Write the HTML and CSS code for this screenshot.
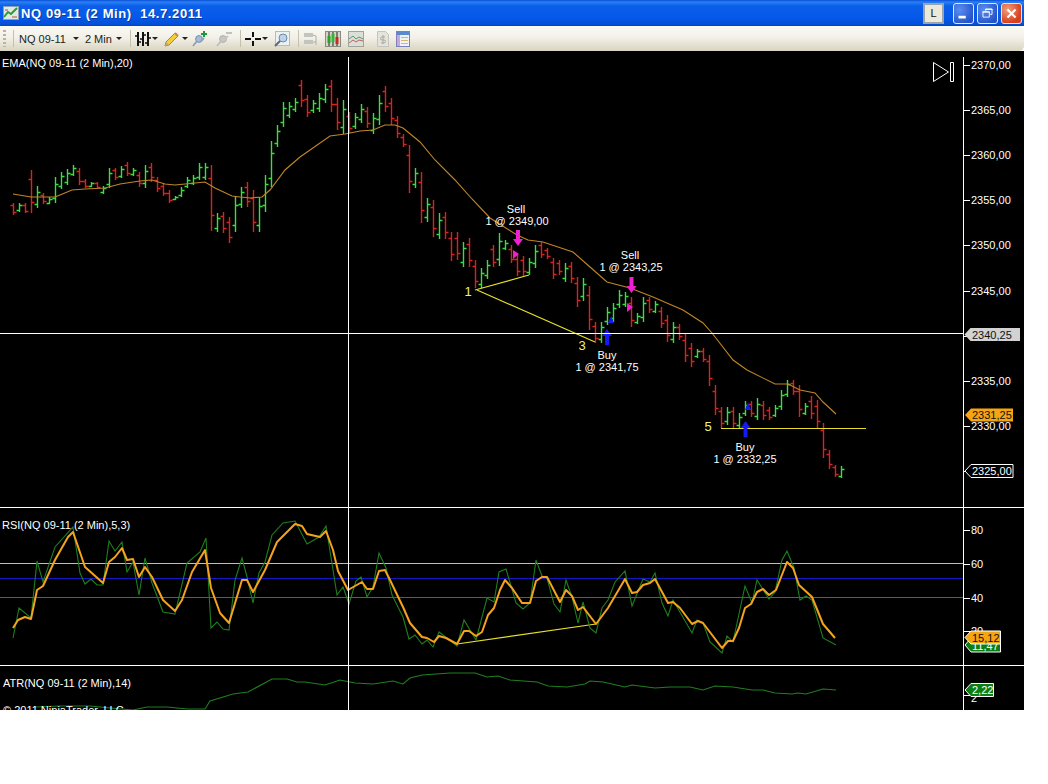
FILE: index.html
```html
<!DOCTYPE html>
<html lang="en">
<head>
<meta charset="utf-8">
<title>NQ 09-11 (2 Min) 14.7.2011</title>
<link rel="stylesheet" href="styles.css">
</head>
<body>
<div class="window">
  <header class="titlebar">
    <svg class="app-icon" width="16" height="16" viewBox="0 0 16 16"><rect x="0.5" y="1.5" width="15" height="13" fill="#dfe8e4" stroke="#8aa0b8"/><path d="M1 12 5 7l3 2 6-6" fill="none" stroke="#2a9a3a" stroke-width="2"/><path d="M2 5h3M9 12h5" stroke="#c05030"/></svg>
    <span class="title">NQ 09-11 (2 Min)  14.7.2011</span>
    <div class="title-buttons">
      <span class="link-btn">L</span>
      <span class="win-btn"><svg width="21" height="21" viewBox="0 0 21 21"><rect x="5" y="13" width="8" height="3" fill="#fff"/></svg></span>
      <span class="win-btn"><svg width="21" height="21" viewBox="0 0 21 21"><path d="M8.5 7.500v-2h7v6h-2M5.500 8.500h7v6h-7z" fill="none" stroke="#fff"/><path d="M8 6h8M5 9h8" stroke="#fff"/></svg></span>
      <span class="win-btn close"><svg width="21" height="21" viewBox="0 0 21 21"><path d="M6 6l9 9M15 6l-9 9" stroke="#fff" stroke-width="2.4"/></svg></span>
    </div>
  </header>
  <nav class="toolbar">
    <span class="grip"></span>
    <span class="sep"></span>
    <span class="tb-text tb-instrument">NQ 09-11</span><span class="caret caret-a"></span>
    <span class="tb-text tb-interval">2 Min</span><span class="caret caret-b"></span>
    <span class="sep sep-b"></span>
    <svg class="ic ic-bars" width="16" height="16" viewBox="0 0 16 16"><path d="M3 1v14M8 1v14M13 1v14" stroke="#111" stroke-width="2"/><path d="M0 5h3M3 11h3M5 8h3M8 4h3M10 12h3M13 7h3" stroke="#111" stroke-width="1.6"/></svg><span class="caret caret-c"></span>
    <svg class="ic ic-pencil" width="16" height="16" viewBox="0 0 16 16"><path d="M1 15l1-4L11 2l3 3-9 9z" fill="#f2cf3a" stroke="#a88a20"/><path d="M1 15l1-4 3 3z" fill="#c8a070"/><path d="M11 2l3 3" stroke="#d88040" stroke-width="2"/></svg><span class="caret caret-d"></span>
    <svg class="ic ic-pin" width="16" height="16" viewBox="0 0 16 16"><circle cx="7" cy="8" r="3.4" fill="#a8bcd4" stroke="#7890b0"/><path d="M1 15l4-5" stroke="#8a9ab0" stroke-width="1.6"/><path d="M9 10l3-3" stroke="#8fa2ba" stroke-width="2"/><path d="M12 0v6M9 3h6" stroke="#1f9a3a" stroke-width="2"/></svg>
    <svg class="ic ic-pin2" width="16" height="16" viewBox="0 0 16 16"><circle cx="7" cy="8" r="3.4" fill="#c8c8c4" stroke="#b0b0ac"/><path d="M1 15l4-5" stroke="#bbb" stroke-width="1.6"/><path d="M9 8l3-3" stroke="#c4c4c0" stroke-width="2"/><path d="M10 2h6" stroke="#b4b4b0" stroke-width="1.6"/></svg>
    <span class="sep sep-c"></span>
    <svg class="ic ic-cross" width="16" height="16" viewBox="0 0 16 16"><path d="M0 8h6M10 8h6M8 1v5M8 10v5" stroke="#111" stroke-width="2"/></svg><span class="caret caret-e"></span>
    <svg class="ic ic-zoom" width="16" height="16" viewBox="0 0 16 16"><rect x="1.5" y="0.5" width="14" height="14" fill="#eef1f0" stroke="#b8bcb8"/><circle cx="9" cy="7" r="4" fill="#bcd4ea" stroke="#6a8aaa"/><path d="M1 15l5-5" stroke="#586a80" stroke-width="2"/></svg>
    <span class="sep sep-d"></span>
    <svg class="ic ic-g1" width="16" height="16" viewBox="0 0 16 16"><rect x="1" y="2" width="9" height="4" fill="#c4c4be"/><rect x="1" y="9" width="9" height="4" fill="#c4c4be"/><path d="M10 4l3 1v9M10 11h3" stroke="#b0b0aa" fill="none"/></svg>
    <svg class="ic ic-candle" width="16" height="16" viewBox="0 0 16 16"><rect x="0.5" y="0.5" width="15" height="15" fill="#d8d4c4" stroke="#8a8a80"/><path d="M4 1v14" stroke="#222"/><rect x="2.5" y="5" width="3" height="7" fill="#2aa030"/><path d="M8 1v14" stroke="#222"/><rect x="6.5" y="3" width="3" height="8" fill="#30b838"/><path d="M12 1v14" stroke="#222"/><rect x="10.5" y="6" width="3" height="7" fill="#c82a20"/></svg>
    <svg class="ic ic-line" width="16" height="16" viewBox="0 0 16 16"><rect x="0.5" y="0.5" width="15" height="15" fill="#dcdfd8" stroke="#a0a49c"/><path d="M1 8l4-3 3 3 3-2 4 2" fill="none" stroke="#4aa070"/><path d="M1 12l4-3 3 2 3-2 4 1" fill="none" stroke="#c06060"/></svg>
    <svg class="ic ic-doc" width="16" height="16" viewBox="0 0 16 16"><path d="M2.500 0.500h8l3 3v12h-11z" fill="#e4e4dc" stroke="#c4c4bc"/><path d="M8 4v9M10 6H7a1 1 0 0 0 0 3h2a1 1 0 0 1 0 3H6" fill="none" stroke="#a8a8a0"/></svg>
    <svg class="ic ic-panel" width="16" height="16" viewBox="0 0 16 16"><rect x="1.5" y="0.5" width="13" height="15" fill="#f0f2f8" stroke="#7c80b8"/><rect x="2" y="1" width="12" height="3" fill="#5a8ad0"/><rect x="2" y="4" width="3" height="11" fill="#c8a8d8"/><path d="M6 6.500h7M6 9.500h7M6 12.500h7" stroke="#d8b860"/></svg>
  </nav>
  <main class="chart">
    <svg class="plot" width="1024" height="659" viewBox="0 51 1024 659" aria-label="Price chart">
      <!-- Price bars, filled in from data by chart.js -->
      <path id="bars-up" class="bar bar-up" d=""></path>
      <path id="bars-down" class="bar bar-down" d=""></path>
      <polyline class="ema" points="13,194 31,197 55,197 60,195 72,190 85,189 105,188 120,184 140,181 152,180 165,184 175,185 205,182 215,188 232,196 240,197 250,198 262,197 270,190 285,170 300,157 330,136 345,134 360,131 373,130 385,125 395,125 403,128 420,142 435,160 455,180 472,199 490,218 517,235 528,240 543,242 573,252 590,267 607,282 630,288 653,297 683,310 703,323 712,333 733,360 747,370 775,384 788,384 800,390 815,393 823,402 836,414"></polyline>
      <!-- Drawn trend lines -->
      <path class="draw" d="M475 290 529 275M477 290 595 342M721 428.500H866M457 644 596 624"></path>
      <text class="wave" x="468" y="296" text-anchor="middle">1</text>
      <text class="wave" x="582" y="350" text-anchor="middle">3</text>
      <text class="wave" x="708" y="431" text-anchor="middle">5</text>
      <!-- Executions -->
      <path class="sell" d="M516 230h4v9h3l-5 7-5-7h3z"></path>
      <path class="sell" d="M629.500 277h4v9h3l-5 7-5-7h3z"></path>
      <path class="sell" d="M513 250l6 4-6 5z"></path>
      <path class="sell" d="M627 303l6 4-6 5z"></path>
      <path class="buy" d="M605 345h4v-9h3l-5-7-5 7h3z"></path>
      <path class="buy" d="M743.500 437h4v-9h3l-5-7-5 7h3z"></path>
      <path class="buy" d="M611 316l3 7h-6z"></path>
      <path class="buy" d="M748 402l3 8h-6z"></path>
      <text class="t" x="516" y="213" text-anchor="middle">Sell</text>
      <text class="t" x="517" y="225" text-anchor="middle">1 @ 2349,00</text>
      <text class="t" x="630" y="259" text-anchor="middle">Sell</text>
      <text class="t" x="631" y="271" text-anchor="middle">1 @ 2343,25</text>
      <text class="t" x="607" y="359" text-anchor="middle">Buy</text>
      <text class="t" x="607" y="371" text-anchor="middle">1 @ 2341,75</text>
      <text class="t" x="745" y="451" text-anchor="middle">Buy</text>
      <text class="t" x="745" y="463" text-anchor="middle">1 @ 2332,25</text>
      <!-- RSI panel -->
      <path class="lvl60" d="M0 563.500H963"></path>
      <path class="lvl50" d="M0 578.500H963"></path>
      <path class="lvl40" d="M0 597.500H963"></path>
      <polyline class="rsi-raw" points="13,638 19,608 31,618 37,561 43,582 55,547 73,527 80,573 85,584 91,579 97,585 103,585 109,541 115,551 122,542 127,572 133,562 139,595 145,558 152,583 163,612 175,614 187,563 200,552 206,538 211,628 217,622 223,629 229,630 235,580 242,558 247,577 253,603 259,573 265,562 272,535 283,523 295,521 307,544 319,537 326,526 337,595 343,587 349,604 356,581 361,577 367,597 373,587 379,553 386,568 392,595 403,617 409,639 415,635 422,644 427,640 433,647 439,632 452,642 457,646 464,620 476,640 487,598 494,602 499,572 506,569 516,603 523,609 530,603 536,560 542,576 547,578 554,604 560,612 566,580 572,597 578,623 583,602 590,628 596,633 602,608 608,600 615,582 625,571 632,606 643,579 650,582 655,573 662,603 668,616 673,600 692,633 697,620 703,623 710,642 722,653 727,636 733,642 745,586 752,603 757,580 769,599 775,592 782,560 787,551 794,568 800,600 806,596 812,600 823,638 836,645"></polyline>
      <polyline class="rsi" points="13,628 18,620 25,617 31,619 37,590 43,586 55,560 68,537 73,532 85,567 103,583 109,562 115,557 122,548 127,560 133,559 139,577 145,567 152,577 163,600 175,611 182,600 192,572 205,550 211,588 220,613 229,623 242,580 247,580 253,592 265,570 277,542 295,524 302,526 307,534 320,537 326,531 333,550 338,571 348,590 362,582 367,589 373,589 379,571 385,570 390,580 403,607 410,623 422,637 427,638 434,642 439,636 446,638 457,644 464,631 469,631 476,636 482,632 488,615 494,608 500,590 505,580 512,588 522,603 530,603 536,581 542,577 547,577 560,602 566,590 572,596 578,610 583,607 596,624 608,608 625,579 632,593 637,592 643,585 650,583 655,579 668,603 673,602 680,608 692,624 698,621 703,623 722,648 728,641 733,641 739,628 745,608 751,604 757,592 763,589 769,595 776,590 787,562 793,568 799,585 812,597 823,624 835,638"></polyline>
      <!-- ATR panel -->
      <polyline class="atr" points="35,707 60,706 90,706 110,708 133,710 147,707 167,707 187,709 205,709 210,701 233,694 248,692 272,679 287,679 297,682 305,682 325,685 340,680 355,683 373,684 393,681 403,684 410,678 422,675 450,673 475,673 487,677 498,676 510,680 537,682 548,686 567,687 585,684 590,681 603,682 625,687 632,685 655,688 670,687 690,687 703,690 715,686 733,687 752,690 763,690 775,693 792,694 798,693 806,694 823,689 836,690"></polyline>
      <!-- Crosshair and panel rules -->
      <path class="rule" d="M348.500 57V710M0 333.500H963M963.500 57V710M0 507.500H1024M0 665.500H1024"></path>
      <!-- Scale ticks -->
      <path class="rule" d="M964 65.500h6M964 110.500h6M964 155.500h6M964 200.500h6M964 245.500h6M964 291.500h6M964 336.500h6M964 381.500h6M964 426.500h6M964 471.500h6M964 530.500h6M964 564.500h6M964 598.500h6M964 631.500h6M964 695.500h6"></path>
      <text class="t" x="971" y="69">2370,00</text>
      <text class="t" x="971" y="114">2365,00</text>
      <text class="t" x="971" y="159">2360,00</text>
      <text class="t" x="971" y="204">2355,00</text>
      <text class="t" x="971" y="249">2350,00</text>
      <text class="t" x="971" y="295">2345,00</text>
      <text class="t" x="971" y="385">2335,00</text>
      <text class="t" x="971" y="430">2330,00</text>
      <text class="t" x="971" y="534">80</text>
      <text class="t" x="971" y="568">60</text>
      <text class="t" x="971" y="602">40</text>
      <text class="t" x="971" y="635">20</text>
      <text class="t" x="971" y="702">2</text>
      <!-- Value badges -->
      <path class="badge-grey" d="M964.500 334.500l6-6.500h49.500v13h-49.500z"></path>
      <text class="t t-dark" x="972" y="339">2340,25</text>
      <path class="badge-orange" d="M965 415l6-6.500h42v13h-42z"></path>
      <text class="t t-dark" x="972" y="419">2331,25</text>
      <path class="badge-black" d="M965 471l6-6.500h42v13h-42z"></path>
      <text class="t" x="972" y="475">2325,00</text>
      <path class="badge-green" d="M965 645l6-7h29.500v14h-29.500z"></path>
      <text class="t" x="972" y="650">11,47</text>
      <path class="badge-orange badge-line" d="M965 637.500l6-6.500h29.500v13h-29.500z"></path>
      <text class="t t-dark" x="972" y="642">15,12</text>
      <path class="badge-green" d="M965 690l6-6.500h22.500v13h-22.500z"></path>
      <text class="t" x="972" y="694">2,22</text>
      <!-- Go to latest bar control -->
      <path class="skip" d="M933.500 62.500v19l15-9.500zM950.500 62.500h3v19h-3z"></path>
      <!-- Panel captions -->
      <text class="t" x="2" y="67">EMA(NQ 09-11 (2 Min),20)</text>
      <text class="t" x="2" y="529">RSI(NQ 09-11 (2 Min),5,3)</text>
      <text class="t" x="3" y="687">ATR(NQ 09-11 (2 Min),14)</text>
      <text class="t" x="3" y="714">© 2011 NinjaTrader, LLC</text>
    </svg>
  </main>
</div>
<script src="chart.js"></script>
</body>
</html>
```
FILE: styles.css
```css
html, body { margin: 0; padding: 0; background: #fff; }
body { font-family: "Liberation Sans", Arial, sans-serif; }

.window { width: 1024px; height: 710px; display: flex; flex-direction: column; overflow: hidden; }

.titlebar {
  height: 26px; flex: none; display: flex; align-items: center; padding: 0 2px 0 3px; box-sizing: border-box;
  background: linear-gradient(#0a4fd8 0, #2a80f4 2px, #0b5fe8 6px, #0558ea 18px, #0450d8 24px, #0344c0 26px);
}
.app-icon { flex: none; }
.title { margin-left: 2px; color: #fff; font-weight: bold; font-size: 13px; letter-spacing: .6px; white-space: pre; text-shadow: 1px 1px 0 #0a3aa0; }
.title-buttons { margin-left: auto; display: flex; align-items: center; gap: 3px; }
.link-btn {
  width: 17px; height: 17px; margin-right: 6px; border: 2px solid #9aa4ae; background: #ece9d8; color: #111;
  font-size: 11px; line-height: 17px; text-align: center;
}
.win-btn {
  width: 19px; height: 19px; border: 1px solid #dfe8fa; border-radius: 3px; display: flex; align-items: center; justify-content: center;
  background: radial-gradient(circle at 30% 30%, #5a8ef0, #2452c8 80%);
}
.win-btn.close { background: radial-gradient(circle at 30% 30%, #f0a080, #d8401c 70%); }

.toolbar {
  height: 25px; flex: none; display: flex; align-items: center; box-sizing: border-box; padding-left: 3px;
  background: linear-gradient(#fbfaf5, #f1efe6 50%, #d8d4c0);
  border-radius: 0 6px 5px 0;
}
.grip { width: 3px; height: 17px; background: repeating-linear-gradient(#b8b4a4 0 2px, transparent 2px 4px); }
.sep { width: 1px; height: 17px; margin-left: 7px; background: #c4c0ae; }
.tb-text { font-size: 11px; color: #222; }
.tb-instrument { margin-left: 5px; }
.tb-interval { margin-left: 6px; }
.caret { width: 0; height: 0; border: 3px solid transparent; border-top: 3px solid #222; border-bottom: 0; flex: none; }
.caret-a { margin-left: 7px; }
.caret-b { margin-left: 4px; }
.sep-b { margin-left: 8px; }
.ic { flex: none; }
.ic-bars { margin-left: 4px; }
.caret-c { margin-left: 1px; }
.ic-pencil { margin-left: 6px; }
.caret-d { margin-left: 2px; }
.ic-pin { margin-left: 4px; }
.ic-pin2 { margin-left: 8px; }
.sep-c { margin-left: 8px; }
.ic-cross { margin-left: 4px; }
.caret-e { margin-left: 1px; }
.ic-zoom { margin-left: 6px; }
.sep-d { margin-left: 8px; }
.ic-g1 { margin-left: 4px; }
.ic-candle { margin-left: 6px; }
.ic-line { margin-left: 7px; }
.ic-doc { margin-left: 11px; }
.ic-panel { margin-left: 4px; }

.chart { height: 659px; flex: none; background: #000; }
.plot { display: block; font-family: "Liberation Sans", Arial, sans-serif; }

.bar { fill: none; stroke-width: 1.4; }
.bar-up { stroke: #3ade40; }
.bar-down { stroke: #dc221e; }
.ema { fill: none; stroke: #c08628; stroke-width: 1.1; }
.draw { fill: none; stroke: #e6e02a; stroke-width: 1.2; }
.wave { fill: #f0f07a; font-size: 13px; }
.sell { fill: #f020d0; }
.buy { fill: #1818f0; }
.t { fill: #fff; font-size: 11px; }
.t-dark { fill: #111; }
.lvl60 { stroke: #b4d468; stroke-width: 1.2; }
.lvl50 { stroke: #1616c4; stroke-width: 1.2; }
.lvl40 { stroke: #9a28c4; stroke-width: 1.2; }
.rsi-raw { fill: none; stroke: #1f7f1f; stroke-width: 1.1; }
.rsi { fill: none; stroke: #f5a31c; stroke-width: 2; stroke-linejoin: round; }
.atr { fill: none; stroke: #1f7f1f; stroke-width: 1.1; }
.rule { fill: none; stroke: #fff; stroke-width: 1; shape-rendering: crispEdges; }
.badge-grey { fill: #d2d2d2; }
.badge-orange { fill: #f5a512; }
.badge-line { stroke: #fff; stroke-width: 1; }
.badge-black { fill: #000; stroke: #fff; stroke-width: 1; }
.badge-green { fill: #0e7e12; stroke: #fff; stroke-width: 1; }
.skip { fill: none; stroke: #fff; stroke-width: 1; }
```
FILE: chart.js
```js
// One entry per 2-minute bar: direction, then high-low as screen y values.
var BARS = "r203-215 g203-212 r203-213 r170-213 g186-208 r193-204 g197-204 g177-203 g172-189 g169-185 g165-176 r168-185 r179-188 g182-187 r182-188 g186-194 g168-188 r168-180 g166-178 r162-176 g168-176 r172-187 g165-188 r163-182 r177-192 r183-196 r190-203 g196-200 g187-197 g177-188 g175-185 g163-180 g163-180 r165-231 g213-232 r212-233 r217-243 g196-232 g187-208 r182-207 r190-232 g197-232 g175-212 g141-187 g125-147 g102-127 g102-118 g98-112 r80-107 r95-117 g100-113 g93-112 g84-103 r80-112 r98-130 g100-134 r112-133 g113-129 g104-123 r107-128 g113-134 g95-125 r86-112 r98-125 r116-138 r134-147 r145-193 g168-188 r172-223 g198-222 r200-237 g213-239 r212-239 r232-261 r232-260 g242-267 r238-267 r260-288 g268-288 g260-279 r245-267 g233-266 g240-250 r245-263 r255-276 r256-276 g258-275 g245-268 r242-258 r248-259 r258-279 r260-275 g263-282 r262-283 r277-307 g278-301 r286-330 r322-343 g322-343 g307-325 g303-322 g290-308 g292-307 r297-327 g313-324 g297-322 r297-313 g301-313 r307-328 r315-342 g322-343 r324-340 r334-362 r343-367 g349-358 r348-362 r355-386 r385-415 r407-428 g407-425 r407-428 g413-428 g401-416 r401-417 g398-420 r401-420 r407-420 g405-417 g390-410 g380-397 r380-395 r385-417 g403-415 r396-419 r400-428 r423-458 r450-469 r465-477 g466-478";

(function () {
  var up = "", down = "";
  BARS.split(" ").forEach(function (bar, i) {
    var isUp = bar.charAt(0) === "g";
    var range = bar.slice(1).split("-").map(Number);
    var hi = range[0], lo = range[1], h = lo - hi;
    var x = 13.5 + 6 * i;
    var open = Math.round(isUp ? lo - h * 0.2 : hi + h * 0.2) + 0.5;
    var close = Math.round(isUp ? hi + h * 0.25 : lo - h * 0.25) + 0.5;
    var d = "M" + x + " " + hi + "V" + lo + "M" + (x - 3) + " " + open + "H" + x + "M" + x + " " + close + "H" + (x + 3);
    if (isUp) { up += d; } else { down += d; }
  });
  document.getElementById("bars-up").setAttribute("d", up);
  document.getElementById("bars-down").setAttribute("d", down);
})();
```
